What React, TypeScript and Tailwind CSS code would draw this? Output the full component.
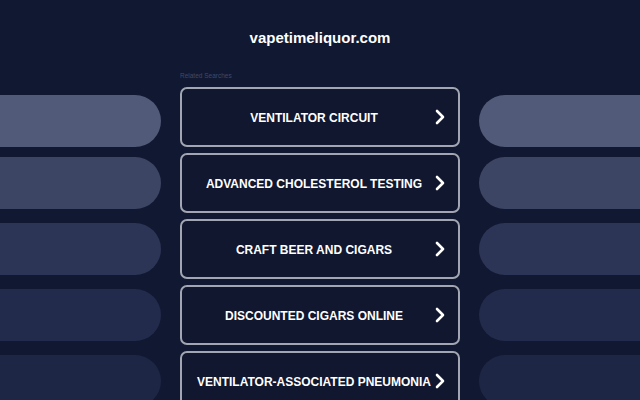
const searches = [
  { label: "VENTILATOR CIRCUIT", pill: "bg-[#525a79]" },
  { label: "ADVANCED CHOLESTEROL TESTING", pill: "bg-[#3d4564]" },
  { label: "CRAFT BEER AND CIGARS", pill: "bg-[#2d3557]" },
  { label: "DISCOUNTED CIGARS ONLINE", pill: "bg-[#232b4c]" },
  { label: "VENTILATOR-ASSOCIATED PNEUMONIA", pill: "bg-[#1e2646]" },
]

function Chevron() {
  return (
    <svg width="10" height="16" viewBox="0 0 10 16" fill="none" className="absolute right-[13px] top-1/2 -translate-y-1/2">
      <polyline points="2,2 8,8 2,14" stroke="white" strokeWidth="2.6" strokeLinecap="round" strokeLinejoin="round" />
    </svg>
  )
}

export default function App() {
  return (
    <div className="h-[400px] w-[640px] overflow-hidden bg-[#111831] font-['Liberation_Sans',Arial,sans-serif]">
      <h1 className="pt-[29px] text-center text-[15px] font-bold leading-[18px] text-white">vapetimeliquor.com</h1>

      <div className="mx-auto mt-[25px] w-[280px] text-[6.5px] leading-[8px] text-[#414968]">Related Searches</div>

      <div className="mt-[7px] flex flex-col gap-[6px]">
        {searches.map((s, i) => (
          <div key={s.label} className="flex justify-center gap-[19px]">
            <div className={`h-[52px] w-[280px] shrink-0 rounded-full ${s.pill} ${i === 0 ? "mt-[8px]" : "mt-[4px]"}`} />
            <a
              href="#"
              className="relative flex h-[60px] w-[280px] shrink-0 items-center justify-center rounded-[7px] border-2 border-[#a2a6b2] bg-[#10172f] pl-[14px] pr-[26px] pt-[2px] text-center text-[12px] font-bold text-white"
            >
              {s.label}
              <Chevron />
            </a>
            <div className={`h-[52px] w-[280px] shrink-0 rounded-full ${s.pill} ${i === 0 ? "mt-[8px]" : "mt-[4px]"}`} />
          </div>
        ))}
      </div>
    </div>
  )
}
